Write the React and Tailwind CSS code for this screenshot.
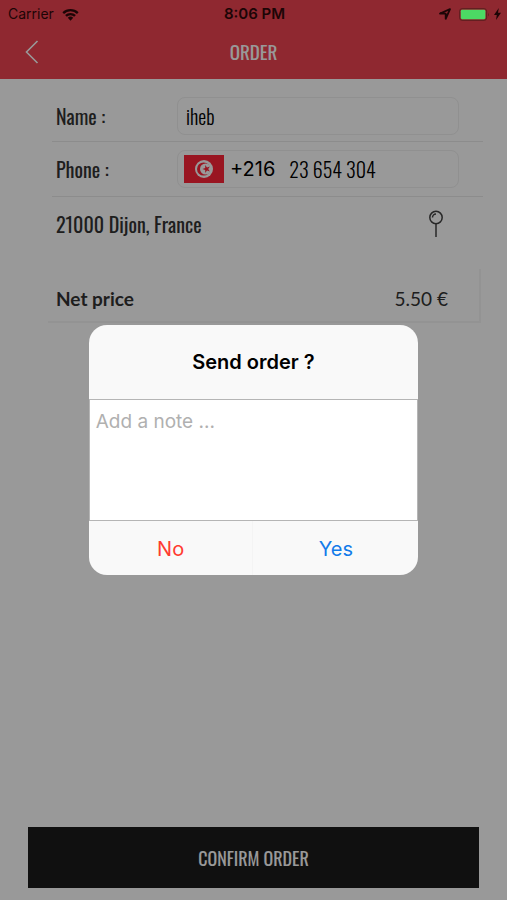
import React from "react";

const narrow = "font-['Oswald','Roboto_Condensed','Liberation_Sans_Narrow','Liberation_Sans',sans-serif]";
const system = "font-['Inter','Liberation_Sans',sans-serif]";

function StatusBar() {
  return (
    <div className={`${system} relative z-20 grid h-7 grid-cols-3 items-center pl-2 pr-1.5 text-sm text-[#1c0506]`}>
      <div className="flex items-center gap-2">
        <span>Carrier</span>
        <svg className="h-[13px] w-[17px]" viewBox="0 0 17 13" aria-label="Wi-Fi">
          <path d="M0.4 4.2a11.6 11.6 0 0 1 16.2 0l-1.6 1.7a9.2 9.2 0 0 0-13 0z" fill="currentColor" />
          <path d="M3.1 7.1a7.7 7.7 0 0 1 10.8 0l-1.7 1.7a5.3 5.3 0 0 0-7.4 0z" fill="currentColor" />
          <path d="M5.8 9.8a3.9 3.9 0 0 1 5.4 0L8.5 12.7z" fill="currentColor" />
        </svg>
      </div>
      <span className="text-center text-[15px] font-semibold">8:06 PM</span>
      <div className="flex items-center justify-end">
        <svg className="mr-2 h-3 w-3" viewBox="0 0 12 12" aria-label="Location">
          <path d="M11 1.2 6.7 10.8V5.7L1 5.5z" fill="none" stroke="currentColor" strokeWidth="1.8" strokeLinejoin="round" />
        </svg>
        <svg className="h-[13px] w-[31px]" viewBox="0 0 31 13" aria-label="Battery charging">
          <rect x="0.6" y="0.6" width="27" height="11.8" rx="2.5" fill="none" stroke="#5f1f20" strokeWidth="1" />
          <rect x="1.8" y="1.8" width="24.6" height="9.4" rx="1.4" fill="#4cd964" />
          <path d="M29 4.5q1.6 2 0 4z" fill="#5f1f20" />
        </svg>
        <svg className="ml-1 h-3 w-[7px]" viewBox="0 0 7 12" aria-hidden="true">
          <path d="M4.8 0 0 7h2.8L2 12l5-7.2H4z" fill="currentColor" />
        </svg>
      </div>
    </div>
  );
}

function Flag() {
  return (
    <svg className="h-7 w-10 shrink-0" viewBox="0 0 40 28" role="img" aria-label="Tunisia">
      <rect width="40" height="28" fill="#ff2438" />
      <circle cx="20" cy="14" r="9" fill="#fff" />
      <circle cx="19.6" cy="14" r="6.6" fill="#ff2438" />
      <circle cx="21.6" cy="14" r="5.6" fill="#fff" />
      <path d="m18.4 14 2.8-1v-3l1.8 2.4 2.9-.9-1.7 2.5 1.7 2.5-2.9-.9-1.8 2.4v-3z" fill="#ff2438" />
    </svg>
  );
}

export default function App() {
  return (
    <div className="relative flex min-h-screen flex-col bg-white">
      <header className="bg-[#ee4350] pb-1">
        <StatusBar />
        <div className="grid h-[47px] grid-cols-3 items-center px-6">
          <button type="button" aria-label="Back" className="w-4 text-white">
            <svg className="h-6 w-4" viewBox="0 0 16 24" fill="none" stroke="currentColor" strokeWidth="1.6">
              <path d="M13.5 1 2.5 12l11 11" />
            </svg>
          </button>
          <h1 className={`${narrow} text-center text-[19px] text-white`}>ORDER</h1>
        </div>
      </header>

      <main className={`${narrow} flex flex-1 flex-col px-7 pb-3 text-xl text-[#333]`}>
        <form className="flex flex-1 flex-col">
          <div className="-mr-1 ml-6 flex h-[63px] items-center border-b border-[#eaeaea] pt-3 pl-1">
            <label htmlFor="name" className="w-[121px]">Name :</label>
            <input id="name" defaultValue="iheb" className="mr-6 h-[38px] min-w-0 flex-1 rounded-lg border border-[#f0f0f0] px-2 font-light text-black" />
          </div>
          <div className="-mr-1 ml-6 flex h-[55px] items-center border-b border-[#eaeaea] pl-1">
            <label htmlFor="phone" className="w-[121px]">Phone :</label>
            <div className="mr-6 flex h-[38px] min-w-0 flex-1 items-center rounded-lg border border-[#f0f0f0] pl-[6px]">
              <Flag />
              <span className={`${system} ml-1.5 text-xl text-black`}>+216</span>
              <input id="phone" type="tel" defaultValue="23 654 304" className="ml-3.5 h-8 min-w-0 flex-1 font-light text-black" />
            </div>
          </div>
          <div className="ml-6 flex h-[54px] items-center justify-between pr-[35px] pl-1">
            <span>21000 Dijon, France</span>
            <button type="button" aria-label="Choose location">
              <svg className="h-7 w-4" viewBox="0 0 16 28" fill="none" stroke="#444" strokeWidth="1.5">
                <circle cx="8" cy="7.5" r="6.2" />
                <path d="M8 13.7V27M4.5 7.5A3.5 3.5 0 0 1 8 4" />
              </svg>
            </button>
          </div>
          <div className="mt-[18px] -mr-0.5 ml-5 flex h-[54px] items-center justify-between border-r-2 border-b-2 border-[#f6f6f6] pt-2 pr-[31px] pl-2 font-['Lato',sans-serif] text-[19px]">
            <span className="font-bold">Net price</span>
            <span>5.50 €</span>
          </div>
          <button type="button" className="mt-auto h-[61px] bg-[#1c1c1c] text-lg text-white">
            CONFIRM ORDER
          </button>
        </form>
      </main>

      <div className={`${system} absolute inset-0 z-10 flex items-center justify-center bg-black/40`}>
        <div role="dialog" aria-modal="true" aria-labelledby="dialog-title" className="w-[65%] overflow-hidden rounded-[18px] bg-[#f9f9f9]">
          <h2 id="dialog-title" className="flex h-[74px] items-center justify-center text-xl font-semibold text-black">
            Send order ?
          </h2>
          <textarea
            aria-label="Note"
            placeholder="Add a note ..."
            className="block h-[122px] w-full resize-none border border-[#b5b5b5] bg-white px-1.5 py-2 text-[19px] placeholder:text-[#b0b0b0]"
          />
          <div className="grid h-[54px] grid-cols-2 text-xl">
            <button type="button" className="border-r border-[#f4f4f4] pt-0.5 text-[#ff3b30]">No</button>
            <button type="button" className="pt-0.5 text-[#127bea]">Yes</button>
          </div>
        </div>
      </div>
    </div>
  );
}
